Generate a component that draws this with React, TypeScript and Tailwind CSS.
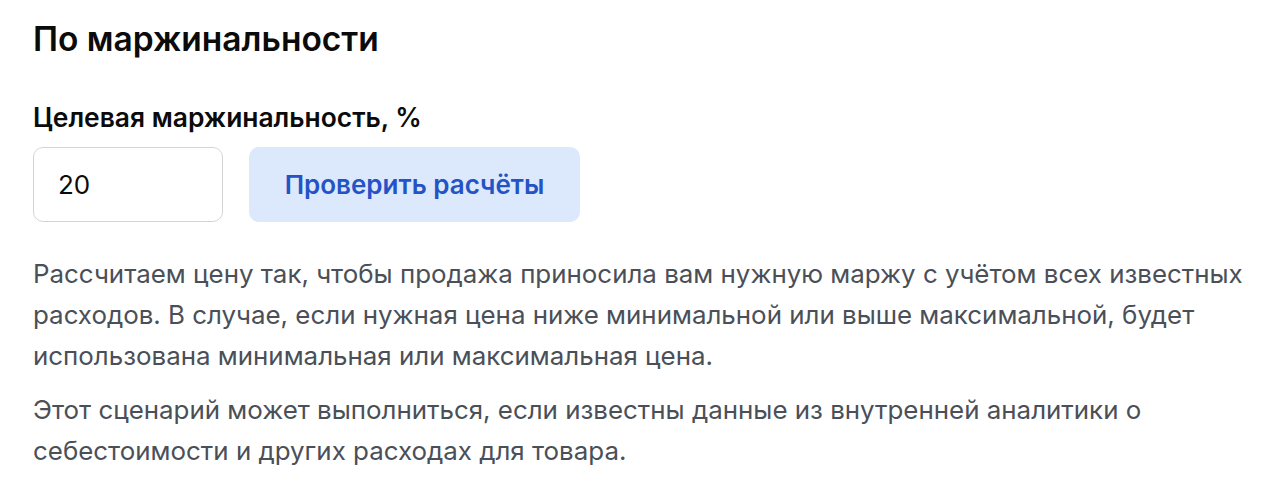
import { useState } from 'react';

export default function App() {
  const [value, setValue] = useState('20');

  return (
    <div className="min-h-[496px] bg-white pl-[33px] pr-[16px] pt-[19px] font-['Inter',sans-serif]">
      <h2 className="text-[33.5px] leading-[40px] font-semibold text-[#0b0b0b]">По маржинальности</h2>

      <div className="mt-[42px]">
        <label className="block text-[26.4px] leading-[32px] font-semibold text-[#0b0b0b]">
          Целевая маржинальность, %
        </label>
        <div className="mt-[14px] flex items-center gap-[26px]">
          <input
            value={value}
            onChange={(e) => setValue(e.target.value)}
            className="h-[75px] w-[190px] rounded-[10px] border border-[#d4d4d4] bg-white px-[24px] text-[26px] text-[#0b0b0b] outline-none"
          />
          <button className="h-[75px] w-[331px] rounded-[10px] bg-[#dce8fb] text-[26px] font-semibold text-[#2453c6]">
            Проверить расчёты
          </button>
        </div>
      </div>

      <div className="mt-[31px] space-y-[13px] text-[25.9px] leading-[41px] text-[#4a4f58]">
        <p>
          Рассчитаем цену так, чтобы продажа приносила вам нужную маржу с учётом всех известных
          расходов. В случае, если нужная цена ниже минимальной или выше максимальной, будет
          использована минимальная или максимальная цена.
        </p>
        <p>
          Этот сценарий может выполниться, если известны данные из внутренней аналитики о
          себестоимости и других расходах для товара.
        </p>
      </div>
    </div>
  );
}
